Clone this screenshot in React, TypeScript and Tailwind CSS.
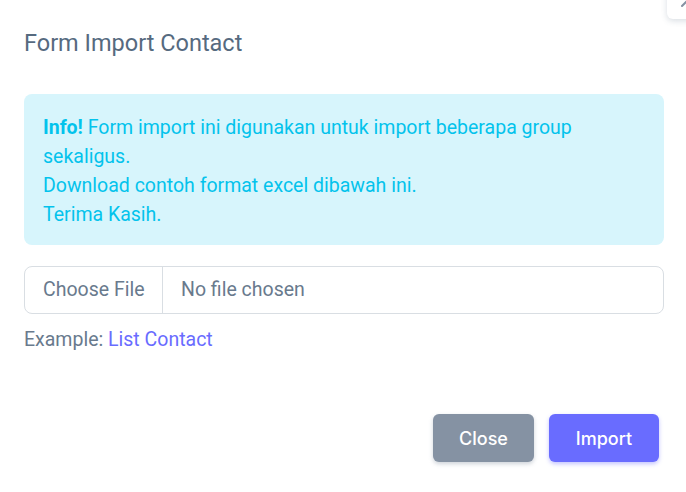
export default function App() {
  return (
    <div
      className="relative w-[686px] h-[492px] overflow-hidden bg-white pl-6 pr-[22px]"
      style={{ fontFamily: "Roboto, 'Noto Sans', sans-serif" }}
    >
      {/* close button sitting off the corner */}
      <button className="absolute -top-[17px] -right-[17px] w-9 h-9 rounded-md bg-white shadow-[0_2px_6px_rgba(67,89,113,0.2)] flex items-center justify-center">
        <svg width="16" height="16" viewBox="0 0 16 16" className="translate-x-[3px] -translate-y-[1px]">
          <path d="M2 2L14 14M14 2L2 14" stroke="#8592a3" strokeWidth="2" strokeLinecap="round" />
        </svg>
      </button>

      <h5 className="pt-[28px] text-[23.5px] leading-[30px] text-[#566a7f]">Form Import Contact</h5>

      <div className="mt-[36px] rounded-lg bg-[#d7f5fc] pl-[19px] pr-4 pt-[19px] pb-[16px] text-[19.5px] leading-[29px] text-[#03c3ec]">
        <p>
          <span className="font-bold">Info!</span> Form import ini digunakan untuk import beberapa group sekaligus.
        </p>
        <p>Download contoh format excel dibawah ini.</p>
        <p>Terima Kasih.</p>
      </div>

      <div className="mt-[21px] flex h-12 rounded-lg border border-[#d9dee3] text-[19.5px] text-[#697a8d]">
        <div className="flex w-[138px] items-center border-r border-[#d9dee3] pl-[18px]">Choose File</div>
        <div className="flex items-center pl-[18px]">No file chosen</div>
      </div>

      <p className="mt-[14px] text-[19.5px] leading-[24px] text-[#697a8d]">
        Example: <a className="text-[#696cff]">List Contact</a>
      </p>

      <div className="mt-[62px] flex justify-end gap-[15px] pr-[5px]" style={{ fontFamily: "Inter, 'Liberation Sans', sans-serif" }}>
        <button className="h-12 w-[101px] rounded-md bg-[#8592a3] text-[18px] font-medium text-white shadow-[0_2px_4px_rgba(133,146,163,0.4)]">
          Close
        </button>
        <button className="h-12 w-[110px] rounded-md bg-[#696cff] text-[18px] font-medium text-white shadow-[0_2px_4px_rgba(105,108,255,0.4)]">
          Import
        </button>
      </div>
    </div>
  );
}
